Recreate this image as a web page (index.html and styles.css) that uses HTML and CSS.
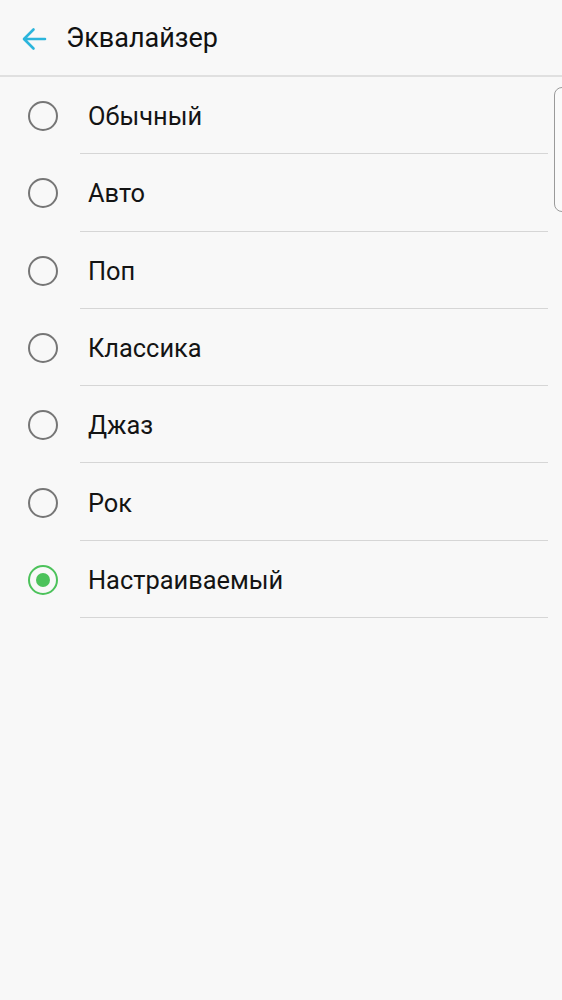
FILE: index.html
```html
<!DOCTYPE html>
<html lang="ru">
<head>
<meta charset="utf-8">
<title>Эквалайзер</title>
<link rel="stylesheet" href="styles.css">
</head>
<body>
<div class="screen">
  <header class="appbar">
    <svg class="back" width="26" height="24" viewBox="0 0 26 24" aria-hidden="true">
      <path d="M24 12H3.5M12.5 2.5L3 12l9.5 9.5" fill="none" stroke="#2bb5dc" stroke-width="2.6" stroke-linecap="round" stroke-linejoin="round"/>
    </svg>
    <h1 class="title">Эквалайзер</h1>
  </header>
  <ul class="list">
    <li class="row"><span class="radio"></span><span class="label">Обычный</span></li>
    <li class="row"><span class="radio"></span><span class="label">Авто</span></li>
    <li class="row"><span class="radio"></span><span class="label">Поп</span></li>
    <li class="row"><span class="radio"></span><span class="label">Классика</span></li>
    <li class="row"><span class="radio"></span><span class="label">Джаз</span></li>
    <li class="row"><span class="radio"></span><span class="label">Рок</span></li>
    <li class="row"><span class="radio checked"></span><span class="label">Настраиваемый</span></li>
  </ul>
  <div class="edge-handle"></div>
</div>
</body>
</html>
```

FILE: styles.css
```css
html, body {
  margin: 0;
  padding: 0;
  background: #f8f8f8;
}
.screen {
  position: relative;
  width: 562px;
  height: 1000px;
  background: #f8f8f8;
  font-family: Roboto, "Noto Sans", "Liberation Sans", sans-serif;
  color: #111;
  overflow: hidden;
}
.appbar {
  height: 77px;
  box-sizing: border-box;
  border-bottom: 2px solid #e0e0e0;
  display: flex;
  align-items: center;
  padding-left: 21px;
}
.back {
  display: block;
  margin-top: 2px;
}
.title {
  margin: 1px 0 0 19px;
  font-size: 27px;
  font-weight: 400;
  color: #111;
}
.list {
  list-style: none;
  margin: 0;
  padding: 0;
}
.row {
  position: relative;
  height: 77.3px;
  display: flex;
  align-items: center;
  padding-left: 28px;
  box-sizing: border-box;
}
.row::after {
  content: "";
  position: absolute;
  left: 80px;
  right: 14px;
  bottom: 0;
  height: 1px;
  background: #d6d6d6;
}
.radio {
  width: 30px;
  height: 30px;
  box-sizing: border-box;
  border: 2.6px solid #767676;
  border-radius: 50%;
  display: flex;
  align-items: center;
  justify-content: center;
  flex: none;
  margin-top: 1px;
}
.radio.checked {
  border-color: #4cc25b;
}
.radio.checked::before {
  content: "";
  width: 14px;
  height: 14px;
  border-radius: 50%;
  background: #4cc25b;
}
.label {
  margin-left: 30px;
  font-size: 25.4px;
  color: #141414;
  margin-top: 1px;
}
.edge-handle {
  position: absolute;
  left: 554px;
  top: 87px;
  width: 20px;
  height: 125px;
  box-sizing: border-box;
  border: 1.5px solid #9a9a9a;
  border-radius: 8px;
  background: #fafafa;
}
```
